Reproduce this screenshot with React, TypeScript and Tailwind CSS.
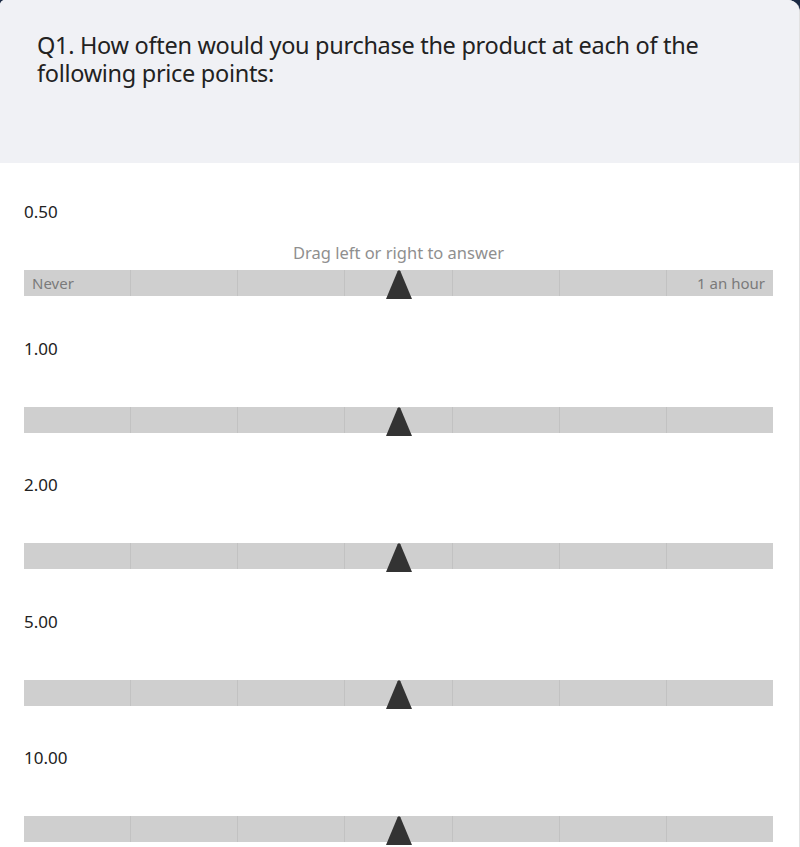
const prices = ["0.50", "1.00", "2.00", "5.00", "10.00"];

function Slider({ first }: { first: boolean }) {
  return (
    <div className="relative h-[26px] w-full">
      <div className="flex h-full w-full bg-[#cfcfcf]">
        {Array.from({ length: 7 }).map((_, i) => (
          <div
            key={i}
            className={`flex-1 ${i > 0 ? "border-l border-[#c2c2c2]" : ""}`}
          />
        ))}
      </div>
      {first && (
        <div className="absolute inset-0 flex items-center justify-between px-2 text-[15px] text-[#7a7a7a]">
          <span>Never</span>
          <span>1 an hour</span>
        </div>
      )}
      {/* thumb */}
      <svg
        className="absolute left-1/2 top-0 -translate-x-1/2"
        width="26"
        height="29"
        viewBox="0 0 26 29"
      >
        <path d="M11.6 1.2 Q13 -0.6 14.4 1.2 L26 29 L0 29 Z" fill="#333333" />
      </svg>
    </div>
  );
}

export default function App() {
  return (
    <div
      className="h-[847px] w-[800px] overflow-hidden bg-[#1b2a44]"
      style={{ fontFamily: '"Noto Sans", "Open Sans", sans-serif' }}
    >
      <div className="h-full overflow-hidden rounded-tl-[5px] rounded-tr-[12px] border-r border-[#e2e2e2] bg-white">
        <div className="h-[163px] bg-[#f0f1f5] px-[37px] pt-[31px]">
          <h1 className="text-[23.5px] leading-[28px] tracking-[-0.3px] text-[#222]">
            Q1. How often would you purchase the product at each of the following price points:
          </h1>
        </div>
        <div className="flex flex-col gap-[42.5px] pl-6 pr-[26px] pt-[39px]">
          {prices.map((p, i) => (
            <div key={p} className="flex flex-col">
              <div className="text-[17px] leading-5 text-[#222]">{p}</div>
              <div className="mt-[21px] h-5 text-center text-[16.5px] leading-5 text-[#8f8f8f]">
                {i === 0 ? "Drag left or right to answer" : ""}
              </div>
              <div className="mt-[7px]">
                <Slider first={i === 0} />
              </div>
            </div>
          ))}
        </div>
      </div>
    </div>
  );
}
